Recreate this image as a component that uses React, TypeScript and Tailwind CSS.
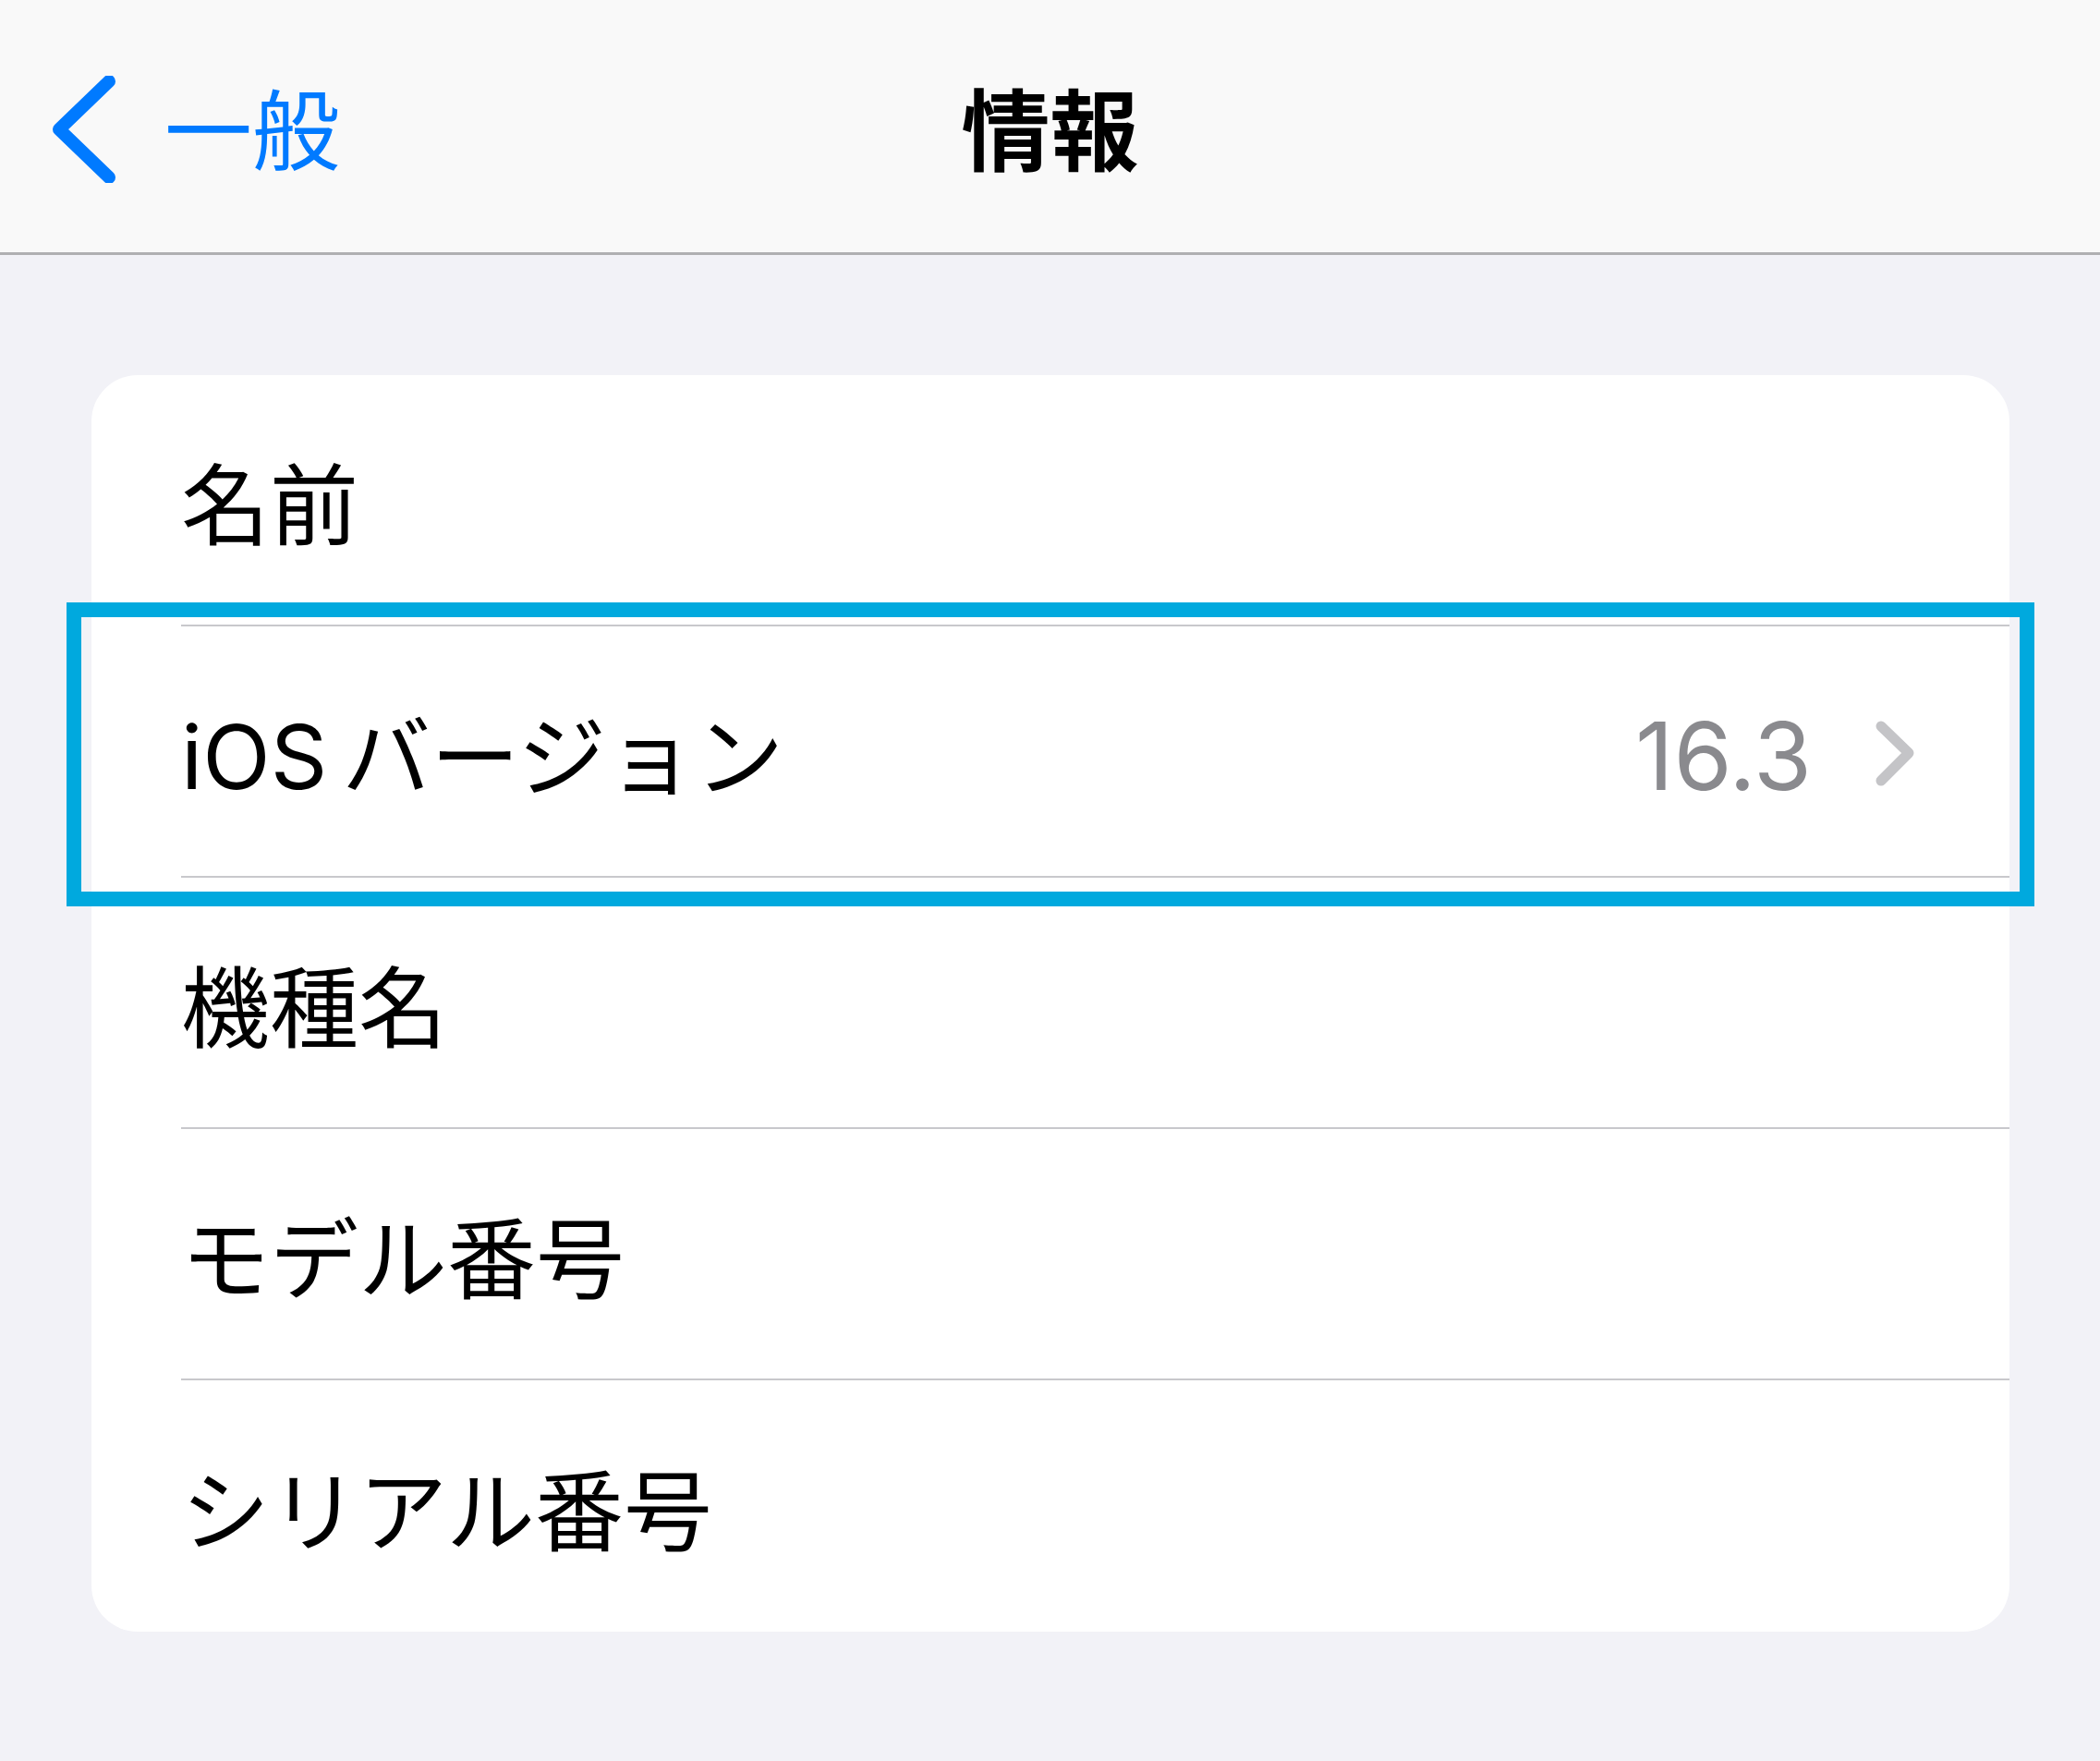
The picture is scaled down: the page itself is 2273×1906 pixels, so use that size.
interface RowProps {
    label: string;
    suffix?: string;
    value?: string;
    last?: boolean;
}

function Row({ label, suffix, value, last }: RowProps) {
    return (
        <div className="pl-[97px]">
            <div
                className={
                    last
                        ? 'h-[272px] flex items-center pr-[98px]'
                        : 'h-[272px] flex items-center pr-[98px] border-b-2 border-[#c8c8cc]'
                }
            >
                <span className="text-[96px] leading-none text-black pt-[12px]">
                    {label}
                    {suffix && <span className="ml-[16px]">{suffix}</span>}
                </span>
                {value && (
                    <div className="ml-auto flex items-center gap-[66px] pt-[4px]">
                        <span className="text-[102px] leading-none text-[#8a8a8e] pt-[6px]">{value}</span>
                        <svg width="50" height="76" viewBox="0 0 50 76" fill="none">
                            <path
                                d="M9 9 L39 38 L9 68"
                                stroke="#c4c4c7"
                                strokeWidth="11"
                                strokeLinecap="round"
                                strokeLinejoin="round"
                            />
                        </svg>
                    </div>
                )}
            </div>
        </div>
    );
}

export default function App() {
    return (
        <div className="w-[2273px] h-[1906px] bg-[#f2f2f7] flex flex-col font-[Inter,'Noto_Sans_CJK_JP',sans-serif]">
            {/* Nav bar */}
            <header className="h-[276px] shrink-0 bg-[#f9f9f9] border-b-[3px] border-[#b0b0b2] grid grid-cols-[1fr_auto_1fr] items-center">
                <div className="flex items-center pl-[56px] pt-[6px]">
                    <svg width="72" height="116" viewBox="0 0 72 116" fill="none">
                        <path
                            d="M62 6 L8 58 L62 110"
                            stroke="#007aff"
                            strokeWidth="14"
                            strokeLinecap="round"
                            strokeLinejoin="round"
                        />
                    </svg>
                    <span className="ml-[50px] text-[95px] leading-none text-[#007aff] pt-[6px]">一般</span>
                </div>
                <h1 className="text-[96px] leading-none font-bold text-black pt-[10px]">情報</h1>
                <div />
            </header>

            {/* Group */}
            <main className="pt-[130px] pl-[99px] pr-[98px]">
                <div className="relative bg-white rounded-[50px]">
                    <Row label="名前" />
                    <Row label="iOS" suffix="バージョン" value="16.3" />
                    <Row label="機種名" />
                    <Row label="モデル番号" />
                    <Row label="シリアル番号" last />

                    {/* Highlight frame */}
                    <div className="absolute left-[-27px] top-[246px] w-[2130px] h-[329px] border-[16px] border-[#00a9de] pointer-events-none" />
                </div>
            </main>
        </div>
    );
}
